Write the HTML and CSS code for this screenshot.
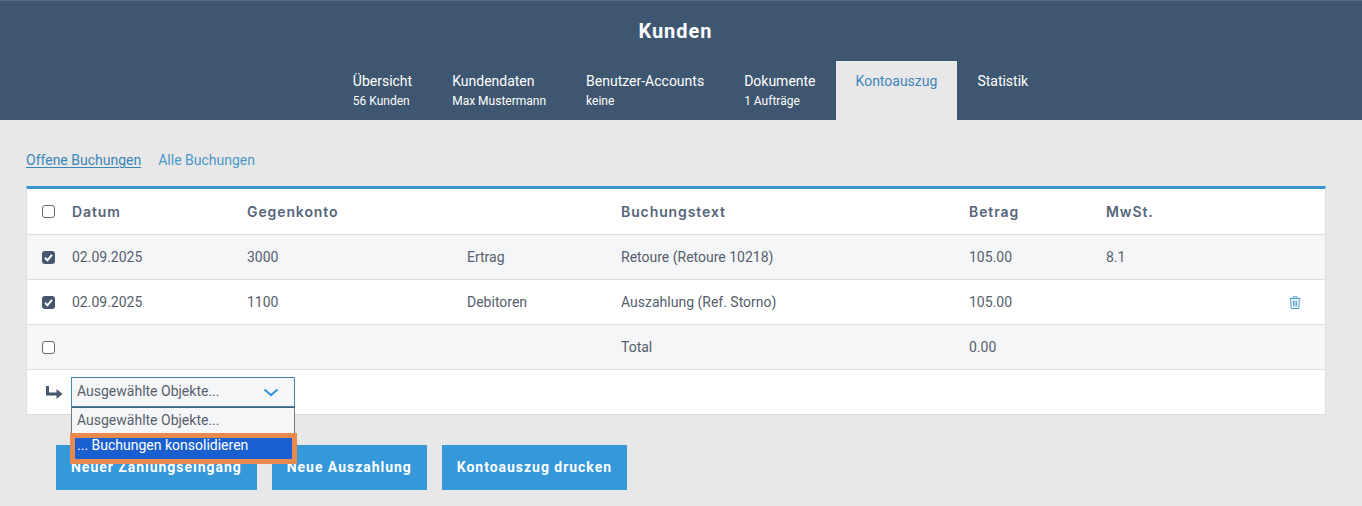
FILE: index.html
```html
<!DOCTYPE html>
<html lang="de">
<head>
<meta charset="utf-8">
<title>Kunden</title>
<link rel="stylesheet" href="styles.css">
</head>
<body>
<header class="head">
  <h1 class="title">Kunden</h1>
  <nav class="tabs">
    <a class="tab"><span class="tab-main">Übersicht</span><span class="tab-sub">56 Kunden</span></a>
    <a class="tab"><span class="tab-main">Kundendaten</span><span class="tab-sub">Max Mustermann</span></a>
    <a class="tab"><span class="tab-main">Benutzer-Accounts</span><span class="tab-sub">keine</span></a>
    <a class="tab"><span class="tab-main">Dokumente</span><span class="tab-sub">1 Aufträge</span></a>
    <a class="tab active"><span class="tab-main">Kontoauszug</span></a>
    <a class="tab"><span class="tab-main">Statistik</span></a>
  </nav>
</header>
<main class="content">
  <div class="filters">
    <a class="filter current">Offene Buchungen</a>
    <a class="filter">Alle Buchungen</a>
  </div>
  <section class="panel">
    <div class="row head-row">
      <span class="c-check"><span class="box"></span></span>
      <span class="c-date">Datum</span>
      <span class="c-acc">Gegenkonto</span>
      <span class="c-type"></span>
      <span class="c-text">Buchungstext</span>
      <span class="c-amt">Betrag</span>
      <span class="c-vat">MwSt.</span>
    </div>
    <div class="row alt">
      <span class="c-check"><span class="box on"><svg viewBox="0 0 13 13" width="13" height="13"><path d="M3 6.800 5.400 9.300 10 3.800" fill="none" stroke="#fff" stroke-width="2"/></svg></span></span>
      <span class="c-date">02.09.2025</span>
      <span class="c-acc">3000</span>
      <span class="c-type">Ertrag</span>
      <span class="c-text">Retoure (Retoure 10218)</span>
      <span class="c-amt">105.00</span>
      <span class="c-vat">8.1</span>
    </div>
    <div class="row">
      <span class="c-check"><span class="box on"><svg viewBox="0 0 13 13" width="13" height="13"><path d="M3 6.800 5.400 9.300 10 3.800" fill="none" stroke="#fff" stroke-width="2"/></svg></span></span>
      <span class="c-date">02.09.2025</span>
      <span class="c-acc">1100</span>
      <span class="c-type">Debitoren</span>
      <span class="c-text">Auszahlung (Ref. Storno)</span>
      <span class="c-amt">105.00</span>
      <span class="c-vat"></span>
      <span class="c-del"><svg viewBox="0 0 12 13" width="12" height="13"><path d="M.5 2.500h11M4 2.500V.8h4v1.700M1.700 2.500l.5 10h7.600l.5-10M4.300 4.500v6M6 4.500v6M7.700 4.500v6" fill="none" stroke="#4a9bd2" stroke-width="1"/></svg></span>
    </div>
    <div class="row alt">
      <span class="c-check"><span class="box"></span></span>
      <span class="c-date"></span>
      <span class="c-acc"></span>
      <span class="c-type"></span>
      <span class="c-text">Total</span>
      <span class="c-amt">0.00</span>
      <span class="c-vat"></span>
    </div>
    <div class="row action-row">
      <span class="c-check"><svg viewBox="0 0 17 13" width="17" height="13"><path d="M1.500 0v8h9.500" fill="none" stroke="#45586e" stroke-width="3"/><path d="M10.500 3 16.500 8 10.500 13z" fill="#45586e"/></svg></span>
      <div class="select">
        <span class="select-label">Ausgewählte Objekte...</span>
        <svg class="chev" viewBox="0 0 16 9" width="16" height="9"><path d="M1.500 1.500 8 7 14.500 1.500" fill="none" stroke="#3a97d4" stroke-width="2.200"/></svg>
      </div>
    </div>
  </section>
  <div class="actions">
    <a class="btn">Neuer Zahlungseingang</a>
    <a class="btn">Neue Auszahlung</a>
    <a class="btn">Kontoauszug drucken</a>
  </div>
  <div class="menu">
    <div class="opt">Ausgewählte Objekte...</div>
    <div class="opt picked"><span>... Buchungen konsolidieren</span></div>
  </div>
</main>
</body>
</html>
```
FILE: styles.css
```css
* { box-sizing: border-box; }
html, body { margin: 0; }
body {
  background: #e8e8e8;
  font-family: Roboto, "Liberation Sans", sans-serif;
  font-size: 14px;
  color: #55606d;
  height: 506px;
  overflow: hidden;
}
.head {
  height: 120px;
  background: #3e566f;
  border-top: 1px solid #506a85;
  display: flex;
  flex-direction: column;
  align-items: center;
}
.title {
  margin: 18px 11px 0 0;
  height: 42px;
  font-size: 20px;
  line-height: 24px;
  font-weight: 700;
  letter-spacing: 1px;
  color: #fff;
}
.tabs { display: flex; height: 59px; margin-left: 19px; }
.tab {
  padding: 12px 20px 0;
  display: flex;
  flex-direction: column;
  color: #fff;
}
.tab-main { font-size: 14px; line-height: 17px; }
.tab-sub { font-size: 12px; line-height: 14px; margin-top: 4px; }
.tab.active { background: #e8e8e8; color: #3f86bd; }
.content { position: relative; padding: 0 36px 0 26px; }
.filters { display: flex; gap: 17px; padding-top: 32px; height: 66px; }
.filter { line-height: 17px; height: 17px; color: #4b97cb; }
.filter.current { color: #3a86b8; text-decoration: underline; text-underline-offset: 2px; }
.panel {
  width: 1300px;
  background: #fff;
  border-top: 3px solid #3a97d4;
  border-left: 1px solid #dcdcdc;
  border-right: 1px solid #dcdcdc;
  border-bottom: 1px solid #dcdcdc;
}
.row {
  display: flex;
  align-items: center;
  height: 45px;
  border-bottom: 1px solid #dcdfe2;
  line-height: 17px;
  position: relative;
}
.row.alt { background: #f5f6f7; }
.head-row {
  height: 46px;
  font-family: Inter, Roboto, sans-serif;
  font-weight: 600;
  font-size: 14px;
  letter-spacing: .9px;
  color: #55657a;
}
.action-row { border-bottom: 0; height: 44px; }
.c-check { width: 45px; padding-left: 15px; display: flex; flex: none; }
.c-date { width: 175px; flex: none; }
.c-acc { width: 220px; flex: none; }
.c-type { width: 154px; flex: none; }
.c-text { width: 348px; flex: none; }
.c-amt { width: 137px; flex: none; }
.c-vat { width: 100px; flex: none; }
.c-del { margin-left: 83px; display: flex; }
.box {
  width: 13px;
  height: 13px;
  border: 1px solid #666;
  border-radius: 3px;
  background: #fff;
  display: block;
}
.box.on { background: #47586e; border: 0; }
.box svg { display: block; }
.action-row .c-check { padding-left: 19px; width: 44px; }
.select {
  width: 224px;
  height: 30px;
  border: 1px solid #3f86a8;
  background: #f5f6f7;
  padding: 0 15px 0 5px;
  display: flex;
  align-items: center;
  justify-content: space-between;
}
.select-label { margin-top: -2px; }
.actions { display: flex; gap: 15px; padding: 30px 0 0 30px; }
.btn {
  height: 45px;
  padding: 0 15px;
  line-height: 45px;
  background: #3498db;
  color: #fff;
  font-weight: 700;
  font-size: 14px;
  letter-spacing: .97px;
}
.menu {
  position: absolute;
  left: 71px;
  top: 287px;
  width: 224px;
  background: #f5f6f7;
  border: 1px solid #767676;
  border-bottom: 0;
  border-top-color: #3f5f7a;
}
.opt { height: 25px; line-height: 25px; padding-left: 5px; }
.opt.picked {
  position: relative;
  margin: 0 -3px 0 -2px;
  height: 31px;
  border: 5px solid #e8894e;
  background: #1a5fd0;
  color: #fff;
  padding-left: 2px;
  line-height: 15px;
}
```
